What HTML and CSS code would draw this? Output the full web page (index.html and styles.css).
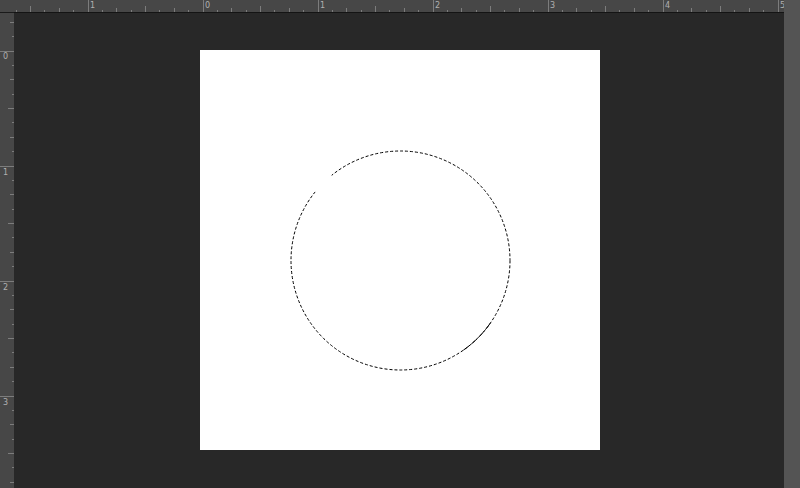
FILE: index.html
```html
<!DOCTYPE html>
<html>
<head>
<meta charset="utf-8">
<link rel="stylesheet" href="styles.css">
</head>
<body>
<div class="app">
  <div class="editor">
    <div class="top-row">
      <div class="corner"></div>
      <div class="ruler-h">
        <svg width="771" height="12" viewBox="14 0 771 12" id="rh">
          <g class="ticks" id="rh-ticks"></g>
          <g class="labels">
            <text x="90" y="8">1</text>
            <text x="205" y="8">0</text>
            <text x="320" y="8">1</text>
            <text x="435" y="8">2</text>
            <text x="550" y="8">3</text>
            <text x="665" y="8">4</text>
            <text x="780" y="8">5</text>
          </g>
        </svg>
      </div>
    </div>
    <div class="body-row">
      <div class="ruler-v">
        <svg width="14" height="475" viewBox="0 13 14 475">
          <g class="ticks" id="rv-ticks"></g>
          <g class="labels">
            <text x="3" y="59">0</text>
            <text x="3" y="175">1</text>
            <text x="3" y="290">2</text>
            <text x="3" y="405">3</text>
          </g>
        </svg>
      </div>
      <div class="workspace">
        <div class="canvas">
          <svg width="400" height="400" viewBox="0 0 400 400">
            <circle cx="200.5" cy="210.5" r="109.5" class="ants-white"/>
            <circle cx="200.5" cy="210.5" r="109.5" class="ants"/>
            <path class="ants-gap" d="M115.4 141.6 A109.5 109.5 0 0 1 131.6 125.4"/>
            <path class="ants-long" d="M290.2 273.3 A109.5 109.5 0 0 1 261.7 301.3"/>
          </svg>
        </div>
      </div>
    </div>
  </div>
  <div class="scroll-strip"></div>
</div>
<script src="app.js"></script>
</body>
</html>
```
FILE: app.js
```js
(function () {
  var ns = "http://www.w3.org/2000/svg";
  function line(g, x1, y1, x2, y2) {
    var l = document.createElementNS(ns, "line");
    l.setAttribute("x1", x1); l.setAttribute("y1", y1);
    l.setAttribute("x2", x2); l.setAttribute("y2", y2);
    g.appendChild(l);
  }
  var unit = 115;
  var h = document.getElementById("rh-ticks");
  var x0 = 87.5 - unit;
  for (var i = 0; i <= 64; i++) {
    var x = x0 + i * unit / 8;
    if (x < 14 || x > 785) continue;
    var xr = Math.round(x) + 0.5;
    var len = (i % 8 === 0) ? 12 : (i % 4 === 0 ? 6 : (i % 2 === 0 ? 4 : 2));
    line(h, xr, 12 - len, xr, 12);
  }
  var v = document.getElementById("rv-ticks");
  var y0 = 50.5 - unit;
  for (var j = 0; j <= 48; j++) {
    var y = y0 + j * unit / 8;
    if (y < 13 || y > 488) continue;
    var yr = Math.round(y) + 0.5;
    var lv = (j % 8 === 0) ? 14 : (j % 4 === 0 ? 6 : (j % 2 === 0 ? 4 : 2));
    line(v, 14 - lv, yr, 14, yr);
  }
})();
```
FILE: styles.css
```css
html, body {
  margin: 0;
  padding: 0;
  width: 800px;
  height: 488px;
  overflow: hidden;
  background: #282828;
  font-family: "DejaVu Sans", "Liberation Sans", sans-serif;
}
.app {
  display: flex;
  width: 800px;
  height: 488px;
}
.editor {
  flex: 1;
  display: flex;
  flex-direction: column;
  min-width: 0;
}
.top-row {
  display: flex;
  height: 13px;
  flex: none;
}
.corner {
  width: 14px;
  height: 12px;
  background: #474747;
  border-bottom: 1px solid #1a1a1a;
}
.ruler-h {
  flex: 1;
  height: 12px;
  background: #474747;
  border-bottom: 1px solid #141414;
  overflow: hidden;
}
.ruler-h svg, .ruler-v svg {
  display: block;
}
.ticks line {
  stroke: #7c7c7c;
  stroke-width: 1;
}
.labels text {
  fill: #b0b0b0;
  font-size: 8px;
  font-family: "DejaVu Sans", sans-serif;
}
.body-row {
  flex: 1;
  display: flex;
  min-height: 0;
}
.ruler-v {
  width: 14px;
  background: #474747;
  flex: none;
  overflow: hidden;
}
.workspace {
  flex: 1;
  background: #282828;
  padding: 37px 0 0 186px;
}
.canvas {
  width: 400px;
  height: 400px;
  background: #ffffff;
}
.canvas svg {
  display: block;
}
.ants {
  fill: none;
  stroke: #000;
  stroke-width: 1;
  stroke-dasharray: 3 2;
}
.ants-white {
  fill: none;
  stroke: #fff;
  stroke-width: 1;
}
.ants-gap {
  fill: none;
  stroke: #fff;
  stroke-width: 2.5;
}
.ants-long {
  fill: none;
  stroke: #000;
  stroke-width: 1;
  stroke-dasharray: 8 2;
}
.scroll-strip {
  width: 16px;
  flex: none;
  background: #545454;
}
```
